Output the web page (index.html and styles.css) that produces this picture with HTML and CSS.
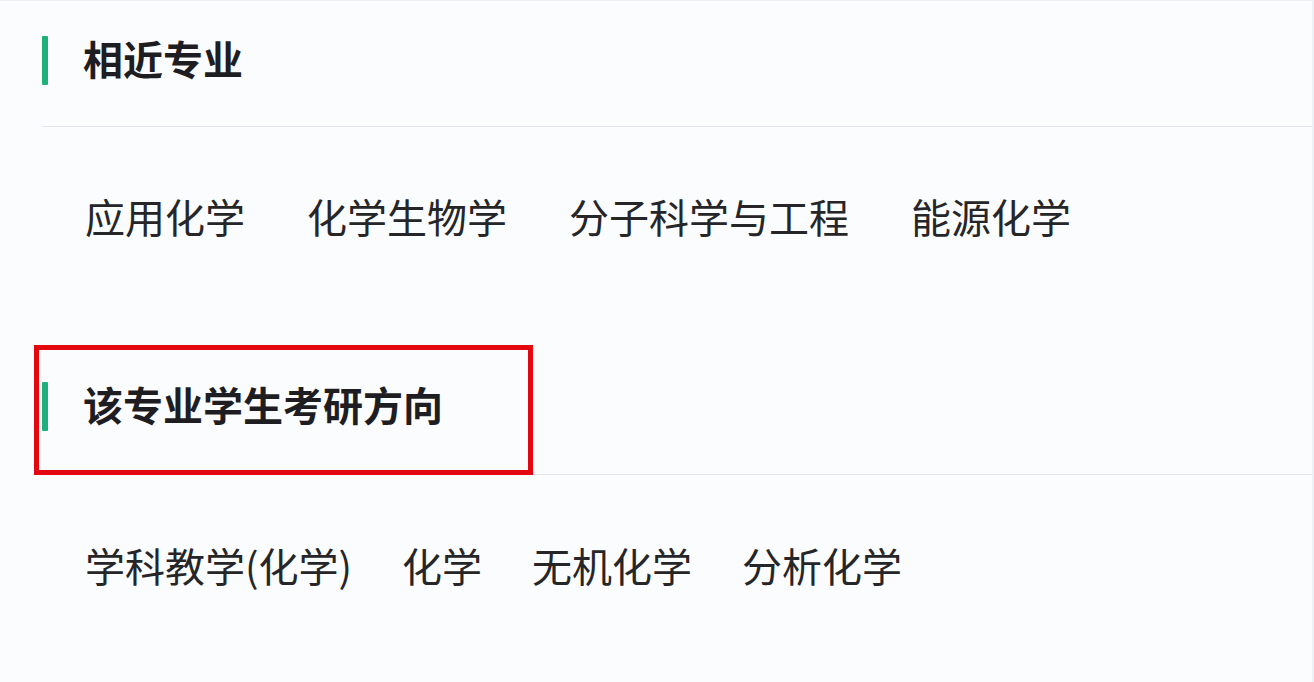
FILE: index.html
```html
<!DOCTYPE html>
<html lang="zh-CN">
<head>
    <meta charset="UTF-8">
    <title>专业详情</title>
    <link rel="stylesheet" href="styles.css">
</head>
<body>
<div class="card">
    <!--相近专业-->
    <div class="section">
        <div class="head">
            <span class="bar"></span>
            <h2 class="title">相近专业</h2>
        </div>
        <ul class="tags">
            <li>应用化学</li>
            <li>化学生物学</li>
            <li>分子科学与工程</li>
            <li>能源化学</li>
        </ul>
    </div>
    <!--考研方向-->
    <div class="section section-next">
        <div class="head">
            <span class="bar"></span>
            <h2 class="title">该专业学生考研方向</h2>
            <!--红框标注-->
            <span class="mark"></span>
        </div>
        <ul class="tags tags-tight">
            <li>学科教学(化学)</li>
            <li>化学</li>
            <li>无机化学</li>
            <li>分析化学</li>
        </ul>
    </div>
</div>
</body>
</html>
```

FILE: styles.css
```css
* {
    margin: 0;
    padding: 0;
}

body {
    background-color: #f9fafc;
    font-family: "Noto Sans CJK SC", "Noto Sans", sans-serif;
    color: #222;
}

.card {
    height: 682px;
    box-sizing: border-box;
    border-top: 1px solid #eef0f4;
    border-right: 2px solid #eef1f5;
    background-color: #fbfcfe;
    overflow: hidden;
}

.section {
    padding-left: 42px;
}

/*标题栏 左侧绿条*/
.head {
    position: relative;
    display: flex;
    align-items: center;
    padding: 35px 0 41px;
    border-bottom: 1px solid #e1e6ee;
}

.bar {
    width: 6px;
    height: 49px;
    background-color: #1fb07b;
    border-radius: 1px;
}

.title {
    margin-left: 35px;
    font-size: 40px;
    font-weight: 700;
    line-height: 49px;
    color: #1e1e22;
    /*字形偏下，往上提一点*/
    position: relative;
    top: -2px;
}

/*红框 盖在标题栏上*/
.mark {
    position: absolute;
    left: -8px;
    top: 0;
    width: 499px;
    height: 130px;
    box-sizing: border-box;
    border: 5px solid #e3070f;
}

.tags {
    list-style: none;
    display: flex;
    gap: 62px;
    padding: 61px 0 0 43px;
}

.tags li {
    font-size: 40px;
    line-height: 56px;
    color: #262629;
}

.tags-tight {
    gap: 50px;
    padding-top: 62px;
}

.section-next {
    margin-top: 101px;
}

.section-next .head {
    padding: 37px 0 43px;
}
```
